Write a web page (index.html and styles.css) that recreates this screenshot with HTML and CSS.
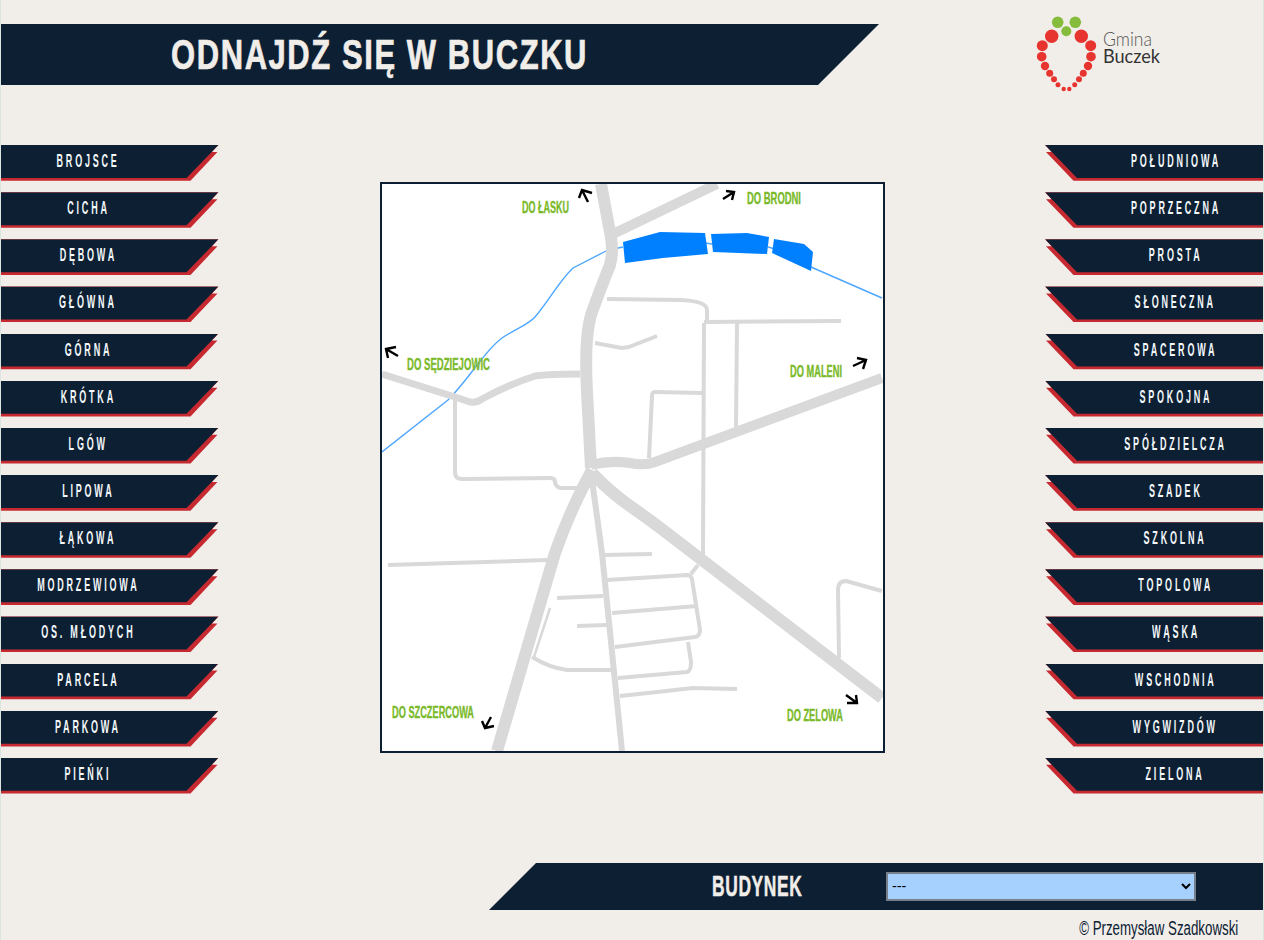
FILE: index.html
```html
<!DOCTYPE html>
<html lang="pl">
<head>
<meta charset="utf-8">
<title>Odnajdź się w Buczku</title>
<link rel="stylesheet" href="styles.css">
</head>
<body>
<div class="page">
  <header class="top">
    <div class="title-bar"><h1 class="title"><span class="squeeze">ODNAJDŹ SIĘ W BUCZKU</span></h1></div>
    <svg class="logo" viewBox="1035 12 130 82" width="130" height="82" role="img" aria-label="Gmina Buczek">
      <g fill="#86bc3c">
        <circle cx="1058.7" cy="22.3" r="5.8"/><circle cx="1076.3" cy="22.3" r="5.8"/><circle cx="1067.3" cy="31.3" r="5"/>
      </g>
      <g fill="#e8342e">
        <circle cx="1052.7" cy="36.3" r="6.7"/><circle cx="1082.3" cy="36.3" r="6.7"/>
        <circle cx="1043.3" cy="45.7" r="5.5"/><circle cx="1091.7" cy="45.7" r="5.5"/>
        <circle cx="1042.7" cy="56.7" r="4.8"/><circle cx="1092" cy="56.7" r="4.8"/>
        <circle cx="1046" cy="66" r="4.2"/><circle cx="1089" cy="66" r="4.2"/>
        <circle cx="1050.7" cy="73.3" r="3.5"/><circle cx="1084.3" cy="73.3" r="3.5"/>
        <circle cx="1055" cy="79.3" r="3"/><circle cx="1080" cy="79.3" r="3"/>
        <circle cx="1059" cy="84.7" r="2.5"/><circle cx="1075.7" cy="84.7" r="2.5"/>
        <circle cx="1064.7" cy="89" r="2.2"/><circle cx="1070.3" cy="89" r="2.2"/>
      </g>
      <text class="logo-top" x="1104" y="46" textLength="49" lengthAdjust="spacingAndGlyphs">Gmina</text>
      <text class="logo-bottom" x="1104" y="62.5" textLength="57" lengthAdjust="spacingAndGlyphs">Buczek</text>
    </svg>
  </header>

  <main class="main">
    <nav class="streets streets-left">
      <a class="street"><span class="squeeze">BROJSCE</span></a>
      <a class="street"><span class="squeeze">CICHA</span></a>
      <a class="street"><span class="squeeze">DĘBOWA</span></a>
      <a class="street"><span class="squeeze">GŁÓWNA</span></a>
      <a class="street"><span class="squeeze">GÓRNA</span></a>
      <a class="street"><span class="squeeze">KRÓTKA</span></a>
      <a class="street"><span class="squeeze">LGÓW</span></a>
      <a class="street"><span class="squeeze">LIPOWA</span></a>
      <a class="street"><span class="squeeze">ŁĄKOWA</span></a>
      <a class="street"><span class="squeeze">MODRZEWIOWA</span></a>
      <a class="street"><span class="squeeze">OS. MŁODYCH</span></a>
      <a class="street"><span class="squeeze">PARCELA</span></a>
      <a class="street"><span class="squeeze">PARKOWA</span></a>
      <a class="street"><span class="squeeze">PIEŃKI</span></a>
    </nav>

    <div class="map">
      <svg class="map-svg" viewBox="382 184 501 567" width="501" height="567">
        <g class="river">
          <path d="M382 452 L448 400 C470 378 485 350 502 338 C515 329 528 325 535 317 C548 302 560 280 573 268 L608 250 M608 250 L623 247"/>
          <path d="M705 243 L712 244 M768 247 L775 249 M811 267 L882 298"/>
        </g>
        <g class="road road-xl">
          <path d="M601 184 L610 232 Q614 250 610 265 Q600 290 592 312 Q584 335 587 392 L591 468"/>
          <path d="M592 470 Q570 510 555 553 L497 751"/>
          <path d="M592 473 Q610 492 630 506 Q650 520 663 530 L882 698"/>
        </g>
        <g class="road road-l">
          <path d="M591 465 Q610 460 630 463 Q645 466 655 462 L882 378"/>
          <path d="M615 233 L717 184"/>
        </g>
        <g class="road road-m">
          <path d="M382 374 L455 397 L470 402 Q477 403 482 399 Q510 384 535 376 Q550 374 580 374"/>
          <path d="M592 480 L602 553 L622 751"/>
        </g>
        <g class="road road-s">
          <path d="M607 299 L680 300 Q707 301 707 310 L707 322"/>
          <path d="M704 323 L703 555"/>
          <path d="M704 322 L841 321"/>
          <path d="M737 323 L736 427"/>
          <path d="M595 343 L622 348 Q628 348 634 345 L657 336"/>
          <path d="M702 393 L655 392 Q652 392 652 396 L649 458"/>
          <path d="M455 400 L455 472 Q455 479 462 479 L550 478 Q555 478 555 482 Q556 488 562 488 L578 488"/>
          <path d="M603 555 L652 554"/>
          <path d="M607 580 L687 575 Q691 575 692 579 L700 630 Q700 636 695 637 L615 647"/>
          <path d="M612 613 L697 606"/>
          <path d="M691 574 L698 565"/>
          <path d="M688 642 L691 662 Q691 671 687 672 L618 678"/>
          <path d="M620 696 L657 692 L693 688 L737 689"/>
          <path d="M557 598 L603 596"/>
          <path d="M577 626 L607 625"/>
          <path d="M532 657 Q550 668 567 670 L612 670"/>
          <path d="M388 565 L548 560"/>
          <path d="M839 658 L838 590 Q838 581 846 581 L882 591"/>
        </g>
        <path class="road-xs" d="M550 608 L534 657"/>
        <g class="lake">
          <polygon points="623,242 660,232 705,233 708,254 663,258 625,263"/>
          <polygon points="711,234 747,233 769,237 767,254 713,252"/>
          <polygon points="774,239 804,244 813,252 811,271 772,253"/>
        </g>
        <g class="arrow">
          <path d="M588 202 L582 190 M579 198 L582 190 L592 193"/>
          <path d="M398 356 L386 349 M388 358 L386 349 L396 347"/>
          <path d="M723 199 L734 192 M726 191 L734 192 L732 200"/>
          <path d="M853 366 L866 360 M857 358 L866 360 L863 369"/>
          <path d="M491 717 L485 728 M482 721 L485 728 L494 726"/>
          <path d="M846 695 L857 703 M856 695 L857 703 L847 703"/>
        </g>
        <g class="place">
          <text x="522" y="213" textLength="47" lengthAdjust="spacingAndGlyphs">DO ŁASKU</text>
          <text x="747" y="204" textLength="54" lengthAdjust="spacingAndGlyphs">DO BRODNI</text>
          <text x="407" y="370" textLength="83" lengthAdjust="spacingAndGlyphs">DO SĘDZIEJOWIC</text>
          <text x="790" y="377" textLength="52" lengthAdjust="spacingAndGlyphs">DO MALENI</text>
          <text x="392" y="718" textLength="82" lengthAdjust="spacingAndGlyphs">DO SZCZERCOWA</text>
          <text x="787" y="721" textLength="56" lengthAdjust="spacingAndGlyphs">DO ZELOWA</text>
        </g>
      </svg>
    </div>

    <nav class="streets streets-right">
      <a class="street"><span class="squeeze">POŁUDNIOWA</span></a>
      <a class="street"><span class="squeeze">POPRZECZNA</span></a>
      <a class="street"><span class="squeeze">PROSTA</span></a>
      <a class="street"><span class="squeeze">SŁONECZNA</span></a>
      <a class="street"><span class="squeeze">SPACEROWA</span></a>
      <a class="street"><span class="squeeze">SPOKOJNA</span></a>
      <a class="street"><span class="squeeze">SPÓŁDZIELCZA</span></a>
      <a class="street"><span class="squeeze">SZADEK</span></a>
      <a class="street"><span class="squeeze">SZKOLNA</span></a>
      <a class="street"><span class="squeeze">TOPOLOWA</span></a>
      <a class="street"><span class="squeeze">WĄSKA</span></a>
      <a class="street"><span class="squeeze">WSCHODNIA</span></a>
      <a class="street"><span class="squeeze">WYGWIZDÓW</span></a>
      <a class="street"><span class="squeeze">ZIELONA</span></a>
    </nav>
  </main>

  <section class="building">
    <label class="building-label" for="building"><span class="squeeze">BUDYNEK</span></label>
    <select class="building-select" id="building"><option>---</option></select>
  </section>
  <footer class="credit"><span class="squeeze">© Przemysław Szadkowski</span></footer>
</div>
</body>
</html>
```
FILE: styles.css
```css
* { box-sizing: border-box; }
html, body { margin: 0; height: 940px; overflow: hidden; }
body { background: #d9e5de; font-family: "Liberation Sans", sans-serif; }
.page {
  width: 1262px; height: 940px; margin-left: 1px;
  background: #f1eeea; color: #0d2033;
  display: flex; flex-direction: column;
}
.squeeze { display: inline-block; white-space: nowrap; flex: none; }

.top { display: flex; justify-content: space-between; align-items: flex-start; height: 145px; padding-top: 24px; }
.title-bar {
  width: 878px; height: 61px; background: #0d2033;
  clip-path: polygon(0 0, 100% 0, 817px 100%, 0 100%);
  display: flex; align-items: center;
}
.title {
  display: flex; justify-content: center;
  margin: 0 0 0 171px; width: 415px;
  font-size: 43px; font-weight: 700; line-height: 61px; color: #f1eeea;
}
.title .squeeze { letter-spacing: 2.2px; transform: scaleX(.72); -webkit-text-stroke: .7px #f1eeea; }
.logo { margin: -12px 99px 0 0; }
.logo-top { font: 300 19px Lato, sans-serif; fill: #555; }
.logo-bottom { font: 400 19px Lato, sans-serif; fill: #333; }

.main { display: flex; justify-content: space-between; align-items: flex-start; height: 718px; }
.streets { width: 218px; display: grid; grid-template-columns: minmax(0, 1fr); grid-auto-rows: 36px; row-gap: 11.15px; }
.street {
  position: relative; display: flex; align-items: center; justify-content: center;
  height: 36px; color: #f4f8fb; font-size: 18px; font-weight: 700;
  background: #c62a30;
}
.street::before { content: ""; position: absolute; inset: 0; background: #0d2033; }
.street .squeeze { position: relative; letter-spacing: 5.6px; transform: scaleX(.5); margin-top: -3px; }
.streets-left .street { padding-right: 44px; clip-path: polygon(0 0, 217.5px 0, 211px 7px, 216.5px 7px, 189.5px 35.7px, 0 35.7px); }
.streets-left .street::before { clip-path: polygon(0 0, 217.5px 0, 185.5px 33px, 0 33px); }
.streets-right .street { padding-left: 43px; clip-path: polygon(0 0, 6.5px 7px, 1px 7px, 28.5px 35.7px, 100% 35.7px, 100% 0); }
.streets-right .street::before { clip-path: polygon(0 0, 100% 0, 100% 33px, 32px 33px); }

.map { width: 505px; height: 571px; margin-top: 37px; border: 2px solid #0d2033; background: #fff; }
.map-svg { display: block; }
.river path { fill: none; stroke: #4da6ff; stroke-width: 1.4; }
.road path, .road-xs { fill: none; stroke: #d9d9d9; stroke-linejoin: round; }
.road-xl path { stroke-width: 12; }
.road-l path { stroke-width: 10; }
.road-m path { stroke-width: 7; }
.road-m path + path { stroke-width: 6; }
.road-s path { stroke-width: 4; }
.road-xs { stroke-width: 2.5; }
.lake { fill: #0080ff; }
.arrow path { fill: none; stroke: #000; stroke-width: 2.4; }
.place text { font: 700 16.5px "Liberation Sans", sans-serif; fill: #7ab929; stroke: #7ab929; stroke-width: .35px; }

.building {
  width: 774px; height: 47px; margin-left: 488px; background: #0d2033;
  clip-path: polygon(47px 0, 100% 0, 100% 100%, 0 100%);
  display: flex; align-items: center;
}
.building-label { display: flex; justify-content: center; margin-left: 223px; width: 90px; color: #f1eeea; font-size: 29px; font-weight: 700; }
.building-label .squeeze { letter-spacing: 1px; transform: scaleX(.6); -webkit-text-stroke: .5px #f1eeea; }
.building-select {
  width: 310px; height: 29px; margin-left: 84px;
  background-color: #a6d1ff; border: 2px solid #767f8a; border-radius: 0;
  color: #000; font: 13.33px "DejaVu Sans", sans-serif;
}
.credit { text-align: right; padding: 6px 25px 0 0; font-size: 20px; line-height: 24px; color: #0d2033; }
.credit .squeeze { transform: scaleX(.665); transform-origin: right center; }
```
